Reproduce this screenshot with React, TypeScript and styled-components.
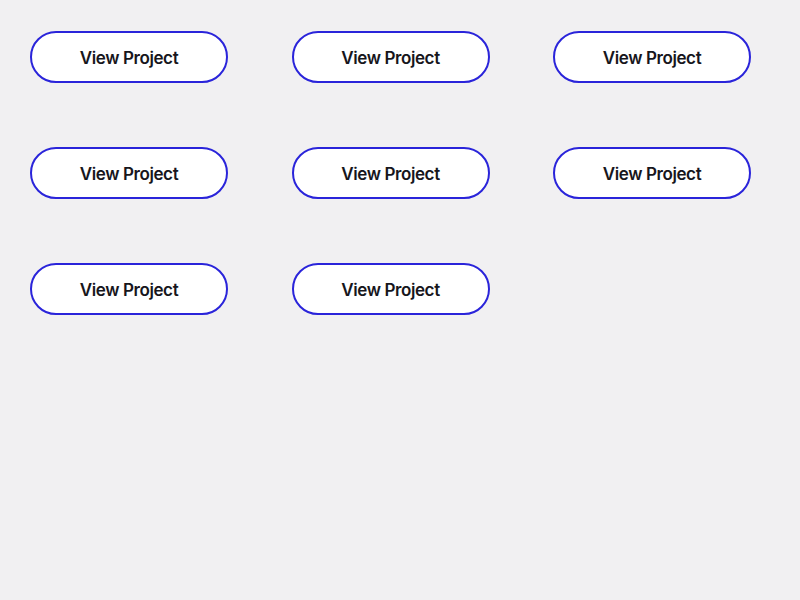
import React from "react";
import styled, { createGlobalStyle } from "styled-components";

const GlobalStyle = createGlobalStyle`
  html, body {
    margin: 0;
    padding: 0;
    background: #f1f0f2;
    font-family: Inter, "Noto Sans", sans-serif;
  }
`;

const Page = styled.main`
  min-height: 600px;
  box-sizing: border-box;
  padding: 31px 30px;
  background: #f1f0f2;
`;

const Grid = styled.div`
  display: grid;
  grid-template-columns: repeat(3, 198px);
  column-gap: 63.5px;
  row-gap: 64px;
`;

const ProjectButton = styled.button`
  box-sizing: border-box;
  width: 198px;
  height: 52px;
  border: 2px solid #2a24da;
  border-radius: 26px;
  background: #ffffff;
  color: #17161c;
  font-family: Inter, sans-serif;
  font-size: 17px;
  font-weight: 600;
  letter-spacing: -0.4px;
  display: flex;
  align-items: center;
  justify-content: center;
  padding: 2px 0 0;
  cursor: pointer;
`;

export default function App() {
  const items = Array.from({ length: 8 }, (_, i) => i);
  return (
    <>
      <GlobalStyle />
      <Page>
        <Grid>
          {items.map((i) => (
            <ProjectButton key={i}>View Project</ProjectButton>
          ))}
        </Grid>
      </Page>
    </>
  );
}
